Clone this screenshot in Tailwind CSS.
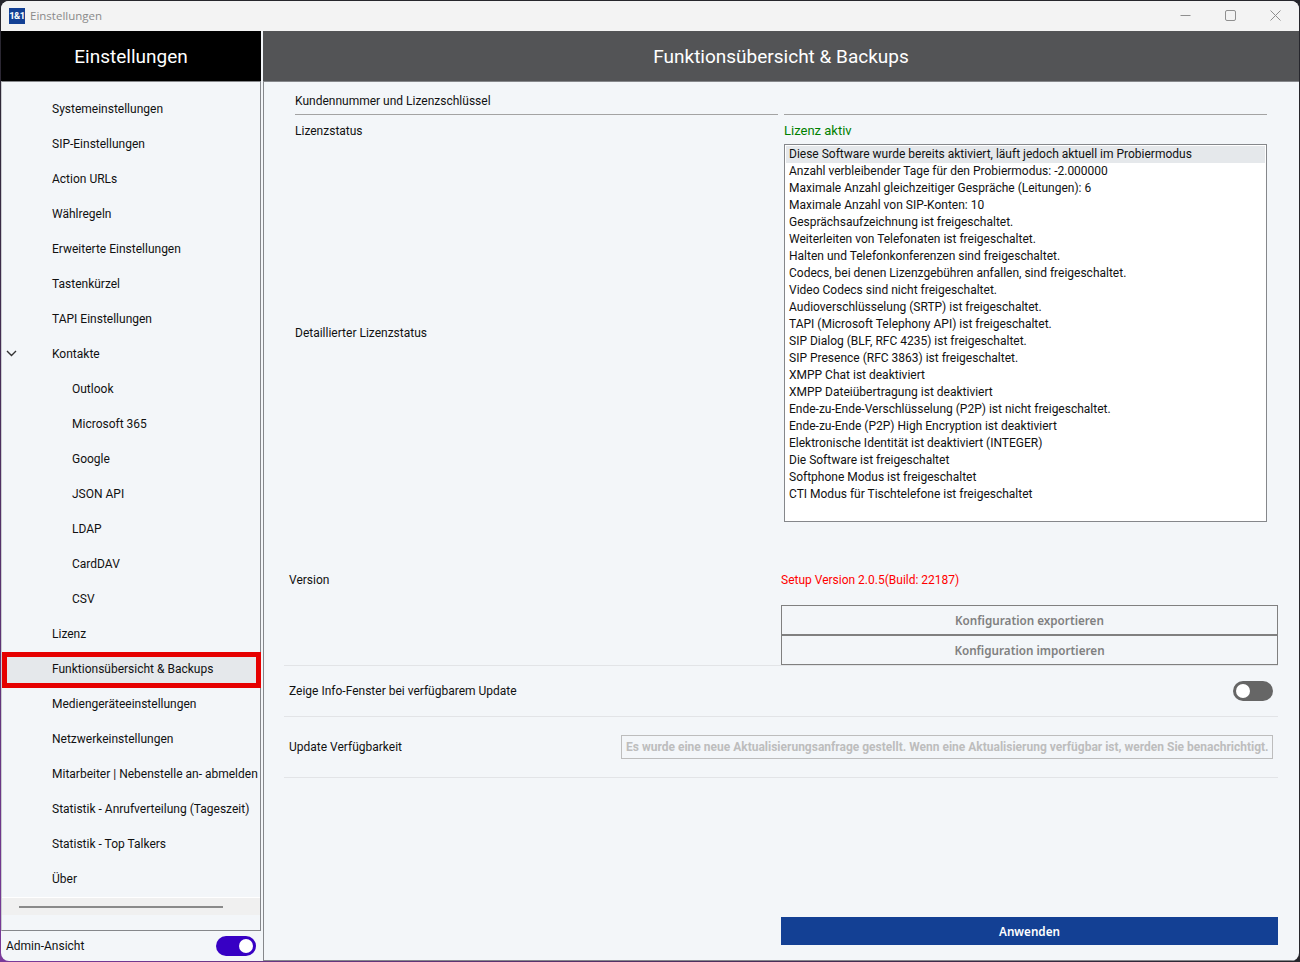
<!DOCTYPE html>
<html lang="de">
<head>
<meta charset="utf-8">
<title>Einstellungen</title>
<script src="https://cdn.jsdelivr.net/npm/@tailwindcss/browser@4"></script>
</head>
<body class="font-['Roboto',sans-serif] text-[12px] leading-[16px] text-[#111]">
<div class="w-[1300px] h-[962px] p-px overflow-hidden bg-[linear-gradient(to_bottom_left,#26262c_50%,#7a3a9a)]">
  <div class="w-[1298px] h-[960px] flex flex-col rounded-[8px] overflow-hidden bg-[#f3f6f9]">
    <!-- title bar -->
    <div class="h-[30px] shrink-0 bg-[#f3f3f3] flex items-center pl-[8px] pr-[18px]">
      <div class="w-[16px] h-[16px] bg-[#134094] text-white text-[9.5px] font-bold leading-[16px] text-center tracking-[-0.5px]">1&amp;1</div>
      <span class="ml-[5px] text-[#8a8a8a] font-['Open_Sans',sans-serif] text-[11.5px]">Einstellungen</span>
      <div class="ml-auto mb-[2px] flex items-center gap-[34px] text-[#8f8f8f]">
        <svg class="w-[11px] h-[11px]" viewBox="0 0 11 11" fill="none" stroke="currentColor"><path d="M0.5 5.5h10"/></svg>
        <svg class="w-[11px] h-[11px]" viewBox="0 0 11 11" fill="none" stroke="currentColor"><rect x="0.5" y="0.5" width="10" height="10" rx="1.5"/></svg>
        <svg class="w-[11px] h-[11px]" viewBox="0 0 11 11" fill="none" stroke="currentColor"><path d="M0.5 0.5l10 10M10.5 0.5l-10 10"/></svg>
      </div>
    </div>
    <div class="flex-1 flex min-h-0">
      <!-- sidebar -->
      <aside class="w-[262px] shrink-0 flex flex-col">
        <div class="h-[50px] w-[260px] shrink-0 bg-black text-white text-[19px] leading-[52px] text-center">Einstellungen</div>
        <div class="h-[850px] w-[260px] shrink-0 border border-[#85878b] border-l-[#c9ccd0] flex flex-col">
          <nav class="pt-[9px] flex flex-col">
            <div class="h-[35px] flex items-center pl-[50px]">Systemeinstellungen</div>
            <div class="h-[35px] flex items-center pl-[50px]">SIP-Einstellungen</div>
            <div class="h-[35px] flex items-center pl-[50px]">Action URLs</div>
            <div class="h-[35px] flex items-center pl-[50px]">Wählregeln</div>
            <div class="h-[35px] flex items-center pl-[50px]">Erweiterte Einstellungen</div>
            <div class="h-[35px] flex items-center pl-[50px]">Tastenkürzel</div>
            <div class="h-[35px] flex items-center pl-[50px]">TAPI Einstellungen</div>
            <div class="h-[35px] flex items-center pl-[4px]">
              <svg class="w-[11px] h-[7px] mr-[35px]" viewBox="0 0 11 7" fill="none" stroke="#333" stroke-width="1.4"><path d="M1 1l4.5 4.5L10 1"/></svg>
              <span>Kontakte</span>
            </div>
            <div class="h-[35px] flex items-center pl-[70px]">Outlook</div>
            <div class="h-[35px] flex items-center pl-[70px]">Microsoft 365</div>
            <div class="h-[35px] flex items-center pl-[70px]">Google</div>
            <div class="h-[35px] flex items-center pl-[70px]">JSON API</div>
            <div class="h-[35px] flex items-center pl-[70px]">LDAP</div>
            <div class="h-[35px] flex items-center pl-[70px]">CardDAV</div>
            <div class="h-[35px] flex items-center pl-[70px]">CSV</div>
            <div class="h-[35px] flex items-center pl-[50px]">Lizenz</div>
            <div class="relative h-[35px] flex items-center pl-[50px]">
              <div class="absolute left-[0px] right-[-1px] top-[1px] bottom-[-2px] border-[5px] border-[#e60000] bg-[#e5e8eb]"></div>
              <span class="relative">Funktionsübersicht &amp; Backups</span>
            </div>
            <div class="h-[35px] flex items-center pl-[50px]">Mediengeräteeinstellungen</div>
            <div class="h-[35px] flex items-center pl-[50px]">Netzwerkeinstellungen</div>
            <div class="h-[35px] flex items-center pl-[50px] whitespace-nowrap">Mitarbeiter | Nebenstelle an- abmelden</div>
            <div class="h-[35px] flex items-center pl-[50px]">Statistik - Anrufverteilung (Tageszeit)</div>
            <div class="h-[35px] flex items-center pl-[50px]">Statistik - Top Talkers</div>
            <div class="h-[35px] flex items-center pl-[50px]">Über</div>
          </nav>
          <div class="mt-[1px] h-[18px] border-t border-white bg-[#f0f0f0] flex items-center pl-[17px]">
            <div class="w-[204px] h-[2px] bg-[#8a8a8a]"></div>
          </div>
        </div>
        <div class="flex-1 flex items-center justify-between pl-[5px] pr-[7px] pb-[1px]">
          <span>Admin-Ansicht</span>
          <div class="w-[40px] h-[20px] rounded-full bg-[#3700c4] flex items-center justify-end pr-[3px]">
            <div class="w-[14px] h-[14px] rounded-full bg-white"></div>
          </div>
        </div>
      </aside>
      <!-- main -->
      <main class="flex-1 flex flex-col min-w-0">
        <div class="h-[50px] shrink-0 bg-[#535456] text-white text-[19px] leading-[52px] text-center">Funktionsübersicht &amp; Backups</div>
        <div class="flex-1 flex flex-col border-l border-t border-b border-[#85878b] pl-[20px] pr-[21px] min-h-0">
          <!-- license -->
          <div class="pl-[11px] grid grid-cols-[483px_483px] gap-x-[6px]">
            <div class="h-[33px] pt-[11px] border-b border-[#a3a3a3]">Kundennummer und Lizenzschlüssel</div>
            <div class="h-[33px] border-b border-[#a3a3a3]"></div>
            <div class="mt-[8px]">Lizenzstatus</div>
            <div class="mt-[8px] text-[#008000] text-[13px]">Lizenz aktiv</div>
            <div class="mt-[5px] flex items-center">Detaillierter Lizenzstatus</div>
            <div class="mt-[5px] h-[378px] border border-[#85878b] bg-white p-px">
              <div class="h-[17px] leading-[17px] pl-[3px] bg-[#e5e8eb]">Diese Software wurde bereits aktiviert, läuft jedoch aktuell im Probiermodus</div>
              <div class="h-[17px] leading-[17px] pl-[3px]">Anzahl verbleibender Tage für den Probiermodus: -2.000000</div>
              <div class="h-[17px] leading-[17px] pl-[3px]">Maximale Anzahl gleichzeitiger Gespräche (Leitungen): 6</div>
              <div class="h-[17px] leading-[17px] pl-[3px]">Maximale Anzahl von SIP-Konten: 10</div>
              <div class="h-[17px] leading-[17px] pl-[3px]">Gesprächsaufzeichnung ist freigeschaltet.</div>
              <div class="h-[17px] leading-[17px] pl-[3px]">Weiterleiten von Telefonaten ist freigeschaltet.</div>
              <div class="h-[17px] leading-[17px] pl-[3px]">Halten und Telefonkonferenzen sind freigeschaltet.</div>
              <div class="h-[17px] leading-[17px] pl-[3px]">Codecs, bei denen Lizenzgebühren anfallen, sind freigeschaltet.</div>
              <div class="h-[17px] leading-[17px] pl-[3px]">Video Codecs sind nicht freigeschaltet.</div>
              <div class="h-[17px] leading-[17px] pl-[3px]">Audioverschlüsselung (SRTP) ist freigeschaltet.</div>
              <div class="h-[17px] leading-[17px] pl-[3px]">TAPI (Microsoft Telephony API) ist freigeschaltet.</div>
              <div class="h-[17px] leading-[17px] pl-[3px]">SIP Dialog (BLF, RFC 4235) ist freigeschaltet.</div>
              <div class="h-[17px] leading-[17px] pl-[3px]">SIP Presence (RFC 3863) ist freigeschaltet.</div>
              <div class="h-[17px] leading-[17px] pl-[3px]">XMPP Chat ist deaktiviert</div>
              <div class="h-[17px] leading-[17px] pl-[3px]">XMPP Dateiübertragung ist deaktiviert</div>
              <div class="h-[17px] leading-[17px] pl-[3px]">Ende-zu-Ende-Verschlüsselung (P2P) ist nicht freigeschaltet.</div>
              <div class="h-[17px] leading-[17px] pl-[3px]">Ende-zu-Ende (P2P) High Encryption ist deaktiviert</div>
              <div class="h-[17px] leading-[17px] pl-[3px]">Elektronische Identität ist deaktiviert (INTEGER)</div>
              <div class="h-[17px] leading-[17px] pl-[3px]">Die Software ist freigeschaltet</div>
              <div class="h-[17px] leading-[17px] pl-[3px]">Softphone Modus ist freigeschaltet</div>
              <div class="h-[17px] leading-[17px] pl-[3px]">CTI Modus für Tischtelefone ist freigeschaltet</div>
            </div>
          </div>
          <!-- version -->
          <div class="mt-[50px] grid grid-cols-[497px_497px]">
            <div class="pl-[5px]">Version</div>
            <div class="text-[#ff0000]">Setup Version 2.0.5(Build: 22187)</div>
          </div>
          <!-- backup buttons -->
          <div class="mt-[17px] flex justify-end border-b border-[#e2e4e7]">
            <div class="w-[497px]">
              <div class="h-[30px] border border-[#808080] flex items-center justify-center font-['Noto_Sans',sans-serif] font-semibold text-[11.7px] text-[#808080]">Konfiguration exportieren</div>
              <div class="h-[30px] border border-[#808080] flex items-center justify-center font-['Noto_Sans',sans-serif] font-semibold text-[11.7px] text-[#808080]">Konfiguration importieren</div>
            </div>
          </div>
          <!-- update toggle -->
          <div class="h-[51px] shrink-0 flex items-center justify-between pl-[5px] pr-[5px] border-b border-[#e2e4e7]">
            <span>Zeige Info-Fenster bei verfügbarem Update</span>
            <div class="w-[40px] h-[20px] rounded-full bg-[#666666] flex items-center pl-[3px]">
              <div class="w-[14px] h-[14px] rounded-full bg-white"></div>
            </div>
          </div>
          <!-- availability -->
          <div class="h-[61px] shrink-0 flex items-center justify-between pl-[5px] pr-[5px] border-b border-[#e2e4e7]">
            <span>Update Verfügbarkeit</span>
            <div class="w-[652px] h-[24px] border border-[#bdbdbd] pl-[4px] flex items-center font-bold text-[#bdbdbd] whitespace-nowrap overflow-hidden">Es wurde eine neue Aktualisierungsanfrage gestellt. Wenn eine Aktualisierung verfügbar ist, werden Sie benachrichtigt.</div>
          </div>
          <!-- apply -->
          <div class="mt-auto mb-[15px] flex justify-end">
            <div class="w-[497px] h-[28px] bg-[#134094] text-white font-['Noto_Sans',sans-serif] font-semibold text-[11.7px] flex items-center justify-center">Anwenden</div>
          </div>
        </div>
      </main>
    </div>
  </div>
</div>
</body>
</html>
